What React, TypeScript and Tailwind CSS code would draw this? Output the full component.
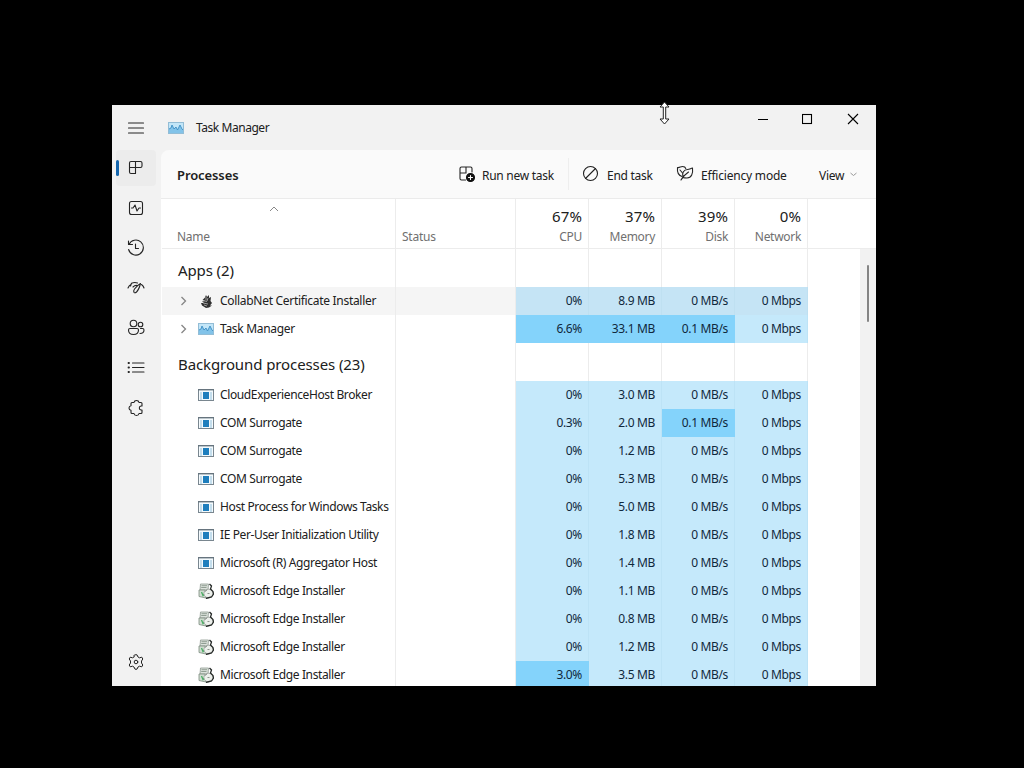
import React from "react";

type IconProps = { className?: string; children: React.ReactNode };

function Glyph({ className = "", children }: IconProps) {
  return (
    <svg width="18" height="18" viewBox="0 0 18 18" fill="none" stroke="currentColor" strokeWidth="1.1" strokeLinecap="round" strokeLinejoin="round" className={`shrink-0 ${className}`}>
      {children}
    </svg>
  );
}

function ChartIcon() {
  return (
    <svg width="16" height="16" viewBox="0 0 16 16" className="shrink-0">
      <rect x="0.5" y="2.5" width="15" height="11" fill="#c3e6f8" stroke="#93bdd6" />
      <path d="M1 13V9L3 8L4 5L6 9L8 7L9.500 10L12 5L14 9L15 10V13Z" fill="#82c3e9" />
      <path d="M1 9L3 8L4 5L6 9L8 7L9.500 10L12 5L14 9L15 10" fill="none" stroke="#3d8fc4" strokeWidth="0.9" />
    </svg>
  );
}

function WindowIcon() {
  return (
    <svg width="16" height="16" viewBox="0 0 16 16" className="shrink-0">
      <rect x="0.5" y="2.5" width="15" height="11" fill="#f4fafd" stroke="#79868f" />
      <path d="M0 2.7H16" stroke="#66747e" strokeWidth="1.4" />
      <rect x="5" y="5" width="6" height="7" fill="#1e7ebd" />
      <path d="M2 6H4M2 8H4M2 10H4M2 12H4M12 6H14M12 8H14M12 10H14M12 12H14" stroke="#7cb2d3" strokeWidth="0.8" />
    </svg>
  );
}

function InstallerIcon() {
  return (
    <svg width="16" height="16" viewBox="0 0 16 16" className="shrink-0">
      <path d="M2.500 1H10.500L10 7H2Z" fill="#dce2dc" stroke="#8e9991" strokeWidth="0.8" />
      <path d="M3.500 2.700H9M3.200 4.500H8.500" stroke="#7e8e82" strokeWidth="0.8" />
      <path d="M1 7H7L8 15L1 13.500Z" fill="#d0ddd1" stroke="#7b8b7d" strokeWidth="0.8" />
      <path d="M3.500 9L5 12.500L6.500 11" fill="none" stroke="#4aac63" strokeWidth="1.3" />
      <ellipse cx="10.500" cy="10.500" rx="4.600" ry="4.300" fill="#edf0ec" stroke="#979d98" strokeWidth="0.8" />
      <path d="M11.500 1L13.500 3L12.500 6L15 8.500L15.500 11L13.500 14L8 15.500" fill="none" stroke="#262a28" strokeWidth="1.3" />
      <path d="M7 8.500L9 7M9.500 10.500H11.500" stroke="#757e77" strokeWidth="0.8" />
    </svg>
  );
}

function CollabIcon() {
  return (
    <svg width="16" height="16" viewBox="0 0 16 16" className="shrink-0">
      <path d="M4.500 7L7 4.500L8 2L9 4L11 2V5L13 4L12.500 8L14 10L12 12.500H14L11 14.500L8 15L4 12.500L3 10L6 10L4 8.500L7 8Z" fill="#303030" />
      <path d="M5 7.500L9 8.500M5 10L10 11M6 12L9 13M8 4L8 7M10 5L9 8" stroke="#cbcbcb" strokeWidth="0.7" />
    </svg>
  );
}

function RunIcon() {
  return (
    <Glyph className="text-[#242424]">
      <path d="M7.500 15H3.500Q2 15 2 13.500V3.500Q2 2 3.500 2H12.500Q14 2 14 3.500V7M8 2V8M2 8H8" />
      <circle cx="12.500" cy="12.500" r="4" fill="#111" stroke="#111" />
      <path d="M12.500 10.500V14.500M10.500 12.500H14.500" stroke="#fff" />
    </Glyph>
  );
}

function EfficiencyIcon() {
  return (
    <Glyph className="text-[#242424]">
      <path d="M6 11.500C2.500 10.500 1 7.500 1.500 2.500C3.500 3 4.500 1.500 6.500 1.500C8.500 1.500 9.500 2.500 9.800 3.500M4 5L6.500 8" />
      <path d="M7 12.500C5.500 8 8 4.500 11.500 4.500C13.500 4.500 14.500 3.500 16.500 3C17.200 8.500 15.500 13 11 13Q8.500 13 7 12.500ZM5 15C6.500 12 9 9.500 12.500 7" />
    </Glyph>
  );
}

const nav = [
  <g key="p"><path d="M4 2.500H13.500Q15 2.500 15 4V7Q15 8.500 13.500 8.500H2.500V4Q2.500 2.500 4 2.500ZM8.500 2.500V14.500H4Q2.500 14.500 2.500 13V8.500" /></g>,
  <g key="a"><rect x="2.500" y="2.500" width="13" height="13" rx="2" /><path d="M4.500 9H6L8 6L10 12L12 9H13.500" /></g>,
  <g key="h"><path d="M1.500 2V5.500H5.500M2 5.500A7.500 7.500 0 1 1 1.600 10.500M8.500 5V9.500H11.500" /></g>,
  <g key="s"><path d="M1 9Q2 6.500 4 5.500M3.500 7L4.500 4.300Q7.500 3 10.500 4M13.500 4.500C12.500 8.500 11.500 11 9.500 13Q8 14.300 7 13.300Q6.200 12 7.500 10Q10 6.500 13.500 4.500ZM14.500 5.500Q16.500 7 17 9M6 8Q8 6 10 6.500" /></g>,
  <g key="u"><circle cx="6.500" cy="4.500" r="3.300" /><circle cx="13.500" cy="5.500" r="2.300" /><path d="M3 9.500H10Q11.500 9.500 11.500 11Q11.500 15.500 6.500 15.500Q1.500 15.500 1.500 11Q1.500 9.500 3 9.500ZM13.500 9.500H15.500Q17 9.500 17 11Q17 14.500 13 14.500" /></g>,
  <g key="d"><path d="M5.500 4H17M5.500 8.500H17M5.500 13H17" /><path d="M1.500 4H2M1.500 8.500H2M1.500 13H2" strokeWidth="1.800" /></g>,
  <g key="e"><path d="M5 3.500H7Q7.300 1.500 9.500 1.500Q11.700 1.500 12 3.500H14Q15 3.500 15 4.500V7H14Q12.300 7.200 12.300 9Q12.300 10.800 14 11H15V13.500Q15 14.500 14 14.500H12Q11.700 16.500 9.500 16.500Q7.300 16.500 7 14.500H5Q4 14.500 4 13.500V11.300Q2 11 2 9Q2 7 4 6.700V4.500Q4 3.500 5 3.500Z" /></g>,
];

function Sidebar() {
  return (
    <aside className="flex w-[49px] shrink-0 flex-col pb-[15px] text-[#242424]">
      <div className="flex h-[45px] items-center pl-[15px]">
        <Glyph><path d="M1.500 4H16.500M1.500 9H16.500M1.500 14H16.500" /></Glyph>
      </div>
      {nav.map((icon, i) => (
        <div key={i} className={`mb-1 ml-1 flex h-9 w-10 items-center rounded ${i === 0 ? "bg-[#ececec]" : ""}`}>
          <span className={`h-4 w-[3px] rounded-full ${i === 0 ? "bg-[#1566ae]" : ""}`} />
          <Glyph className="ml-2">{icon}</Glyph>
        </div>
      ))}
      <div className="mt-auto pl-[15px]">
        <Glyph><path d="M7 2.500L8 1.800H10L11 4L12.500 4.800L14.800 4.200L15.800 6L14.500 8V10L15.800 12L14.800 13.800L12.500 13.200L11 14L10 16.200H8L7 14L5.500 13.200L3.200 13.800L2.200 12L3.500 10V8L2.200 6L3.200 4.200L5.500 4.800L7 4Z" strokeWidth="1" /><circle cx="9" cy="9" r="1.800" strokeWidth="1" /></Glyph>
      </div>
    </aside>
  );
}

type Proc = { name: string; icon: "collab" | "chart" | "window" | "installer"; values: string[]; hot?: number[]; app?: boolean; hover?: boolean };

const apps: Proc[] = [
  { name: "CollabNet Certificate Installer", icon: "collab", values: ["0%", "8.9 MB", "0 MB/s", "0 Mbps"], app: true, hover: true },
  { name: "Task Manager", icon: "chart", values: ["6.6%", "33.1 MB", "0.1 MB/s", "0 Mbps"], hot: [0, 1, 2], app: true },
];

const background: Proc[] = [
  { name: "CloudExperienceHost Broker", icon: "window", values: ["0%", "3.0 MB", "0 MB/s", "0 Mbps"] },
  { name: "COM Surrogate", icon: "window", values: ["0.3%", "2.0 MB", "0.1 MB/s", "0 Mbps"], hot: [2] },
  { name: "COM Surrogate", icon: "window", values: ["0%", "1.2 MB", "0 MB/s", "0 Mbps"] },
  { name: "COM Surrogate", icon: "window", values: ["0%", "5.3 MB", "0 MB/s", "0 Mbps"] },
  { name: "Host Process for Windows Tasks", icon: "window", values: ["0%", "5.0 MB", "0 MB/s", "0 Mbps"] },
  { name: "IE Per-User Initialization Utility", icon: "window", values: ["0%", "1.8 MB", "0 MB/s", "0 Mbps"] },
  { name: "Microsoft (R) Aggregator Host", icon: "window", values: ["0%", "1.4 MB", "0 MB/s", "0 Mbps"] },
  { name: "Microsoft Edge Installer", icon: "installer", values: ["0%", "1.1 MB", "0 MB/s", "0 Mbps"] },
  { name: "Microsoft Edge Installer", icon: "installer", values: ["0%", "0.8 MB", "0 MB/s", "0 Mbps"] },
  { name: "Microsoft Edge Installer", icon: "installer", values: ["0%", "1.2 MB", "0 MB/s", "0 Mbps"] },
  { name: "Microsoft Edge Installer", icon: "installer", values: ["3.0%", "3.5 MB", "0 MB/s", "0 Mbps"], hot: [0] },
];

const icons = { collab: <CollabIcon />, chart: <ChartIcon />, window: <WindowIcon />, installer: <InstallerIcon /> };
const columns = "grid grid-cols-[234px_120px_73px_73px_73px_73px] w-[646px] shrink-0";

function Row({ p }: { p: Proc }) {
  return (
    <div className={`${columns} h-7`}>
      <div className={`flex items-center border-r border-[#ececec] pl-4 ${p.hover ? "bg-[#f5f5f5]" : ""}`}>
        <span className="flex w-5 shrink-0 items-center">
          {p.app && <svg width="10" height="12" viewBox="0 0 10 12" fill="none" stroke="#858585" strokeWidth="1.3"><path d="M3.500 2L7.500 6L3.500 10" /></svg>}
        </span>
        {icons[p.icon]}
        <span className={`ml-1.5 whitespace-nowrap ${p.app ? "tracking-[-0.3px]" : "tracking-[-0.38px]"}`}>{p.name}</span>
      </div>
      <div className={`border-r border-[#ececec] ${p.hover ? "bg-[#f5f5f5]" : ""}`} />
      {p.values.map((v, i) => (
        <div key={i} className={`flex items-center justify-end whitespace-nowrap border-r pr-1.5 tracking-[-0.35px] text-[#10283c] ${p.hot?.includes(i) ? "border-[#84d3fb] bg-[#84d3fb]" : p.hover ? "border-[#bfe0f1] bg-[#c5e4f5]" : "border-[#bde3f6] bg-[#c5e9fb]"}`}>{v}</div>
      ))}
    </div>
  );
}

function Group({ title }: { title: string }) {
  return (
    <div className={`${columns} h-[38px]`}>
      <div className="flex items-center whitespace-nowrap border-r border-[#ececec] pl-4 pt-1 text-[15px] tracking-[-0.1px]">{title}</div>
      {[0, 1, 2, 3, 4].map((i) => <div key={i} className="border-r border-[#ececec]" />)}
    </div>
  );
}

export default function App() {
  return (
    <div className="relative h-screen w-screen overflow-hidden bg-black pl-[112px] pt-[105px] font-['Noto_Sans','Open_Sans',sans-serif] text-[12px] text-[#202020]">
      <div className="flex h-[581px] w-[764px] overflow-hidden bg-[#f2f2f2]">
        <Sidebar />
        <main className="flex min-w-0 flex-1 flex-col">
          <header className="flex h-[45px] shrink-0 items-center pl-[7px]">
            <ChartIcon />
            <h1 className="ml-3 tracking-[-0.45px]">Task Manager</h1>
            <div className="mb-[18px] ml-auto flex items-center gap-[33px] pr-[17px] text-black">
              <svg width="12" height="12" viewBox="0 0 12 12" stroke="currentColor"><path d="M1 6.500H11" /></svg>
              <svg width="12" height="12" viewBox="0 0 12 12" fill="none" stroke="currentColor" strokeWidth="1.100"><rect x="0.500" y="1.500" width="9" height="9" /></svg>
              <svg width="12" height="12" viewBox="0 0 12 12" stroke="currentColor" strokeWidth="1.100"><path d="M1 1L11 11M11 1L1 11" /></svg>
            </div>
          </header>
          <div className="flex h-[49px] shrink-0 items-center rounded-tl-lg border-b border-[#ebebeb] bg-[#fafafa] pl-4 tracking-[-0.28px]">
            <h2 className="w-[281px] pt-[3px] text-[13px] font-semibold tracking-[-0.1px]">Processes</h2>
            <RunIcon /><span className="ml-1.5 w-[86px] whitespace-nowrap pt-[3px]">Run new task</span>
            <div className="h-8 w-px bg-[#eeeeee]" />
            <Glyph className="ml-3"><circle cx="9.500" cy="8.500" r="7" /><path d="M4.500 13.500L14.500 3.500" /></Glyph>
            <span className="ml-2 w-[69px] pt-[3px]">End task</span>
            <EfficiencyIcon /><span className="ml-[7px] w-[118px] whitespace-nowrap pt-[3px] tracking-[-0.2px]">Efficiency mode</span>
            <span className="pt-[3px]">View</span>
            <svg className="ml-[5px]" width="9" height="9" viewBox="0 0 9 9" fill="none" stroke="#999"><path d="M1.500 3L4.500 5.500L7.500 3" /></svg>
          </div>
          <div className="flex min-h-0 flex-1 flex-col bg-white pl-px">
            <div className="h-[50px] border-b border-[#ececec]">
              <div className={`${columns} h-full tracking-[-0.25px] text-[#707070]`}>
                <div className="flex flex-col items-center border-r border-[#ececec] pt-1.5">
                  <svg className="mr-[9px]" width="10" height="8" viewBox="0 0 10 8" fill="none" stroke="#888"><path d="M1 6L5 2L9 6" /></svg>
                  <span className="mt-[15px] self-start pl-[15px] leading-[18px]">Name</span>
                </div>
                <div className="flex items-end border-r border-[#ececec] pb-0.5 pl-1.5 leading-[18px]">Status</div>
                {[["67%", "CPU"], ["37%", "Memory"], ["39%", "Disk"], ["0%", "Network"]].map(([v, n]) => (
                  <div key={n} className="flex flex-col items-end justify-end border-r border-[#ececec] pb-0.5 pr-1.5">
                    <span className="text-[15px] leading-[24px] tracking-[0.1px] text-[#202020]">{v}</span>
                    <span className="leading-[18px] tracking-[-0.3px]">{n}</span>
                  </div>
                ))}
              </div>
            </div>
            <div className="flex min-h-0 flex-1 overflow-hidden">
              <div className="flex flex-1 flex-col">
                <Group title="Apps (2)" />
                {apps.map((p) => <Row key={p.name} p={p} />)}
                <Group title="Background processes (23)" />
                {background.map((p, i) => <Row key={i} p={p} />)}
              </div>
              <div className="w-4 bg-[#f2f2f2] pl-[7px] pt-4"><div className="h-[57px] w-0.5 rounded bg-[#858585]" /></div>
            </div>
          </div>
        </main>
      </div>
      <svg className="absolute left-[659px] top-[101px]" width="11" height="24" viewBox="0 0 11 24">
        <path d="M5.500 1L10 6H6.700V18H10L5.500 23L1 18H4.300V6H1Z" fill="white" stroke="#222" />
      </svg>
    </div>
  );
}
